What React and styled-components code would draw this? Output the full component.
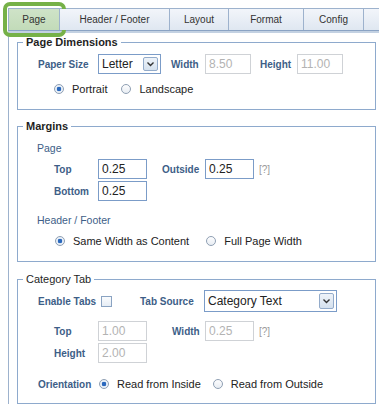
import React from 'react';
import styled, { createGlobalStyle } from 'styled-components';

const GlobalStyle = createGlobalStyle`
  html, body {
    margin: 0;
    padding: 0;
    overflow: hidden;
    background: #fff;
    font-family: "Liberation Sans", Arial, sans-serif;
  }
`;

const tabs = [
  { label: 'Page', width: 52, active: true },
  { label: 'Header / Footer', width: 110 },
  { label: 'Layout', width: 59 },
  { label: 'Format', width: 75 },
  { label: 'Config', width: 60 },
  { label: '', width: 60 },
];

const Chevron = () => (
  <svg width="9" height="6" viewBox="0 0 9 6">
    <path d="M1.5 1.5 L4.5 4.5 L7.5 1.5" fill="none" stroke="#333" strokeWidth="1.4" />
  </svg>
);

const Select = ({ value, width, height }) => (
  <SelectBox $w={width} $h={height}>
    <span>{value}</span>
    <DropButton $h={height - 6}>
      <Chevron />
    </DropButton>
  </SelectBox>
);

const Radio = ({ checked, children }) => (
  <RadioItem>
    <RadioCircle $checked={checked} />
    <span>{children}</span>
  </RadioItem>
);

const App = () => {
  return (
    <Root>
      <GlobalStyle />
      <TabBar>
        {tabs.map((tab, i) => (
          <Tab key={i} $w={tab.width} $active={tab.active}>
            {tab.label}
            {tab.active && <Highlight />}
          </Tab>
        ))}
      </TabBar>

      <Panel>
        <Fieldset $pb={11}>
          <Legend>Page Dimensions</Legend>
          <Row $mt={4} $h={20} $indent={20}>
            <Label $w={60}>Paper Size</Label>
            <Select value="Letter" width={63} height={20} />
            <Label $w={34} $ml={10}>Width</Label>
            <Input $w={46} disabled defaultValue="8.50" />
            <Label $w={37} $ml={9}>Height</Label>
            <Input $w={46} disabled defaultValue="11.00" />
          </Row>
          <Row $mt={6} $h={18} $indent={36}>
            <RadioGroup $gap={14}>
              <Radio checked>Portrait</Radio>
              <Radio>Landscape</Radio>
            </RadioGroup>
          </Row>
        </Fieldset>

        <Fieldset $pb={11} $mt={9}>
          <Legend>Margins</Legend>
          <Row $mt={6} $h={16} $indent={19}>
            <SubLabel>Page</SubLabel>
          </Row>
          <Row $mt={3} $h={20} $indent={36}>
            <Label $w={44}>Top</Label>
            <Input $w={49} defaultValue="0.25" />
            <Label $w={43} $ml={15}>Outside</Label>
            <Input $w={49} defaultValue="0.25" />
            <Help>[?]</Help>
          </Row>
          <Row $mt={2} $h={20} $indent={36}>
            <Label $w={44}>Bottom</Label>
            <Input $w={49} defaultValue="0.25" />
          </Row>
          <Row $mt={11} $h={16} $indent={19}>
            <SubLabel>Header / Footer</SubLabel>
          </Row>
          <Row $mt={4} $h={18} $indent={37}>
            <RadioGroup $gap={17}>
              <Radio checked>Same Width as Content</Radio>
              <Radio>Full Page Width</Radio>
            </RadioGroup>
          </Row>
        </Fieldset>

        <Fieldset $pb={10} $mt={10}>
          <Legend $light>Category Tab</Legend>
          <Row $mt={3} $h={22} $indent={20}>
            <Label $w={63}>Enable Tabs</Label>
            <Checkbox />
            <Label $w={64} $ml={28}>Tab Source</Label>
            <Select value="Category Text" width={133} height={22} />
          </Row>
          <Row $mt={9} $h={20} $indent={36}>
            <Label $w={44}>Top</Label>
            <Input $w={49} disabled defaultValue="1.00" />
            <Label $w={33} $ml={25}>Width</Label>
            <Input $w={49} disabled defaultValue="0.25" />
            <Help>[?]</Help>
          </Row>
          <Row $mt={2} $h={20} $indent={36}>
            <Label $w={44}>Height</Label>
            <Input $w={49} disabled defaultValue="2.00" />
          </Row>
          <Row $mt={12} $h={18} $indent={20}>
            <Label $w={61}>Orientation</Label>
            <RadioGroup $gap={12}>
              <Radio checked>Read from Inside</Radio>
              <Radio>Read from Outside</Radio>
            </RadioGroup>
          </Row>
        </Fieldset>
      </Panel>
    </Root>
  );
};

const Root = styled.div`
  padding: 8px 0 0 8px;
  width: 379px;
  box-sizing: border-box;
  overflow: hidden;
`;

const TabBar = styled.div`
  display: flex;
  height: 21px;
  border-top: 1px solid #9db2cd;
  border-bottom: 1px solid #8aa3c4;
  box-shadow: 0 2px 0 #c3d1e2;
  margin-bottom: 2px;
`;

const Tab = styled.div`
  position: relative;
  flex: none;
  width: ${(p) => p.$w}px;
  box-sizing: border-box;
  border-right: 1px solid #9db2cd;
  border-left: ${(p) => (p.$active ? '1px solid #9db2cd' : 'none')};
  background: ${(p) => (p.$active
    ? 'linear-gradient(#cfe3c8, #c2dbb9)'
    : 'linear-gradient(#f2f5fa, #dfe7f1)')};
  display: flex;
  align-items: center;
  justify-content: center;
  font-size: 10px;
  color: #333;
`;

const Highlight = styled.div`
  position: absolute;
  left: -6px;
  top: -7px;
  width: 63px;
  height: 35px;
  box-sizing: border-box;
  border: 4px solid #76b148;
  border-radius: 7px;
  pointer-events: none;
`;

const Panel = styled.div`
  border-left: 1px solid #9db2cd;
  padding: 2px 0 0 8px;
`;

const Fieldset = styled.fieldset`
  width: 359px;
  box-sizing: border-box;
  margin: ${(p) => p.$mt || 0}px 0 0 0;
  padding: 0 0 ${(p) => p.$pb}px 0;
  border: 1px solid #8eaacd;
  min-width: 0;
`;

const Legend = styled.legend`
  margin-left: 5px;
  padding: 0 3px;
  font-size: 11px;
  line-height: 15px;
  font-weight: ${(p) => (p.$light ? 'normal' : 'bold')};
  color: #1f1f1f;
`;

const Row = styled.div`
  display: flex;
  align-items: center;
  height: ${(p) => p.$h}px;
  margin-top: ${(p) => p.$mt}px;
  padding-left: ${(p) => p.$indent}px;
`;

const Label = styled.span`
  flex: none;
  width: ${(p) => p.$w}px;
  margin-left: ${(p) => p.$ml || 0}px;
  font-size: 10px;
  font-weight: bold;
  color: #3d5e87;
  white-space: nowrap;
`;

const SubLabel = styled.span`
  font-size: 10.5px;
  color: #3d5e87;
`;

const Input = styled.input`
  flex: none;
  width: ${(p) => p.$w}px;
  height: 20px;
  box-sizing: border-box;
  margin: 0;
  padding: 0 3px;
  border: 1px solid #7b9cc8;
  background: #fff;
  font-family: "Liberation Sans", Arial, sans-serif;
  font-size: 12px;
  color: #222;
  outline: none;

  &:disabled {
    border-color: #cfd2d6;
    color: #b3b3b3;
    background: #fff;
  }
`;

const Help = styled.span`
  margin-left: 5px;
  font-size: 10px;
  color: #9a9a9a;
`;

const SelectBox = styled.div`
  flex: none;
  width: ${(p) => p.$w}px;
  height: ${(p) => p.$h}px;
  box-sizing: border-box;
  border: 1px solid #7b9cc8;
  display: flex;
  align-items: center;
  justify-content: space-between;
  padding: 0 2px 0 3px;
  font-size: 12px;
  color: #222;
`;

const DropButton = styled.span`
  width: 15px;
  height: ${(p) => p.$h}px;
  box-sizing: border-box;
  border: 1px solid #93abca;
  border-radius: 2px;
  background: linear-gradient(#eef3f9, #d5e1ee);
  display: flex;
  align-items: center;
  justify-content: center;
`;

const Checkbox = styled.span`
  flex: none;
  width: 11px;
  height: 11px;
  box-sizing: border-box;
  border: 1px solid #8aa3c2;
  background: linear-gradient(#fafcfe, #e6edf5);
`;

const RadioGroup = styled.div`
  display: flex;
  align-items: center;
  gap: ${(p) => p.$gap}px;
`;

const RadioItem = styled.label`
  display: flex;
  align-items: center;
  gap: 8px;
  font-size: 11px;
  color: #222;
  white-space: nowrap;
`;

const RadioCircle = styled.span`
  flex: none;
  width: 10px;
  height: 10px;
  box-sizing: border-box;
  border-radius: 50%;
  border: 1px solid #8f9fb3;
  background: ${(p) => (p.$checked
    ? 'radial-gradient(circle, #2a68bd 0 2px, #e9f0f8 2.6px)'
    : 'linear-gradient(#fdfdfe, #e8edf3)')};
`;

export default App;
